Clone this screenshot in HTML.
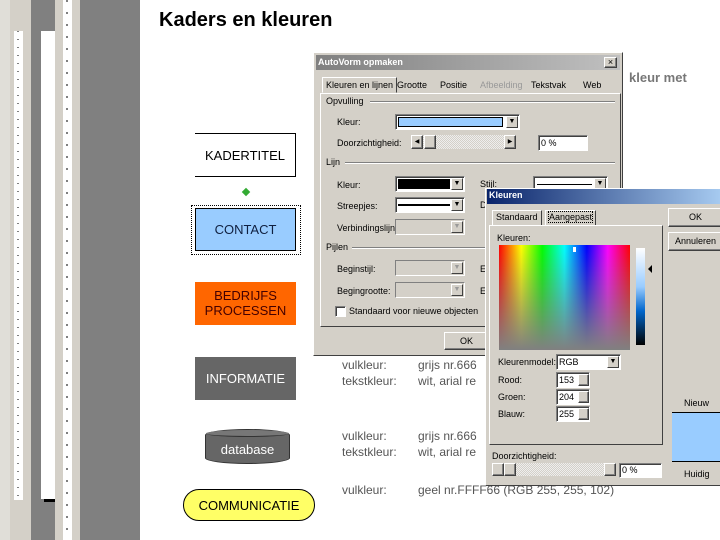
<!DOCTYPE html>
<html><head><meta charset="utf-8"><style>
*{margin:0;padding:0;box-sizing:border-box}
body{width:720px;height:540px;overflow:hidden;position:relative;background:#fff;font-family:"Liberation Sans",sans-serif}
.a{position:absolute}
.t{font-size:9px;color:#000;white-space:nowrap}
.g{font-size:12px;color:#555;white-space:nowrap}
.btn{background:#d4d0c8;border:1px solid;border-color:#fff #404040 #404040 #fff;box-shadow:inset -1px -1px #808080;font-size:9px;text-align:center}
.fld{background:#fff;border:1px solid;border-color:#808080 #fff #fff #808080;box-shadow:inset 1px 1px #404040}
.dis{background:#d4d0c8;border:1px solid;border-color:#808080 #fff #fff #808080}
.dd{position:absolute;right:1px;top:1px;bottom:1px;width:12px;background:#d4d0c8;border:1px solid;border-color:#fff #404040 #404040 #fff;font-size:7px;text-align:center;line-height:10px}
.sep{position:absolute;height:2px;border-top:1px solid #808080;border-bottom:1px solid #fff}
</style></head><body>
<div class="a" style="left:0;top:0;width:140px;height:540px;background:#d4d0c8"></div>
<div class="a" style="left:0;top:0;width:10px;height:540px;background:#e0ded8"></div>
<div class="a" style="left:14px;top:31px;width:9px;height:469px;background:#fff"></div>
<div class="a" style="left:31px;top:0;width:24px;height:540px;background:#808080"></div>
<div class="a" style="left:41px;top:31px;width:14px;height:468px;background:#fff"></div>
<div class="a" style="left:44px;top:499px;width:11px;height:3px;background:#000"></div>
<div class="a" style="left:63px;top:0;width:9px;height:540px;background:#fff"></div>
<div class="a" style="left:80px;top:0;width:60px;height:540px;background:#808080"></div>
<svg class="a" style="left:14px;top:31px" width="9" height="469"><line x1="4" y1="0" x2="4" y2="469" stroke="#000" stroke-dasharray="1 7"/></svg>
<svg class="a" style="left:63px;top:0" width="9" height="540"><line x1="4" y1="0" x2="4" y2="540" stroke="#000" stroke-dasharray="2 10"/></svg>

<div class="a" style="left:159px;top:9px;font-size:20px;font-weight:bold;color:#000">Kaders en kleuren</div>
<div class="a" style="left:629px;top:70px;font-size:13px;font-weight:bold;color:#777">kleur met</div>

<div class="a" style="left:195px;top:133px;width:101px;height:44px;border:1px solid #000;border-left:none;font-size:13px;line-height:44px;text-align:center">KADERTITEL</div>
<div class="a" style="left:243px;top:189px;width:6px;height:6px;background:#3a3;transform:rotate(45deg)"></div>
<div class="a" style="left:191px;top:205px;width:110px;height:50px;border:1px dotted #000"></div>
<div class="a" style="left:195px;top:208px;width:101px;height:43px;background:#99ccff;border:1px solid #000;font-size:13px;line-height:41px;text-align:center;color:#102040">CONTACT</div>
<div class="a" style="left:195px;top:282px;width:101px;height:43px;background:#ff6600;font-size:13px;line-height:15px;padding-top:6px;text-align:center;color:#400">BEDRIJFS<br>PROCESSEN</div>
<div class="a" style="left:195px;top:357px;width:101px;height:43px;background:#666;font-size:13px;line-height:43px;text-align:center;color:#fff">INFORMATIE</div>
<div class="a" style="left:205px;top:429px;width:85px;height:35px;background:#666;border:1px solid #333;border-radius:42px/6px;font-size:13px;line-height:40px;text-align:center;color:#fff">database</div>
<div class="a" style="left:206px;top:430px;width:83px;height:7px;background:#777;border-bottom:1px solid #333;border-radius:50%"></div>
<div class="a" style="left:183px;top:489px;width:132px;height:32px;background:#ffff66;border:1px solid #000;border-radius:16px;font-size:13px;line-height:32px;text-align:center">COMMUNICATIE</div>

<div class="a g" style="left:342px;top:358px">vulkleur:</div>
<div class="a g" style="left:418px;top:358px">grijs nr.666</div>
<div class="a g" style="left:342px;top:374px">tekstkleur:</div>
<div class="a g" style="left:418px;top:374px">wit, arial re</div>
<div class="a g" style="left:342px;top:429px">vulkleur:</div>
<div class="a g" style="left:418px;top:429px">grijs nr.666</div>
<div class="a g" style="left:342px;top:445px">tekstkleur:</div>
<div class="a g" style="left:418px;top:445px">wit, arial re</div>
<div class="a g" style="left:342px;top:483px">vulkleur:</div>
<div class="a g" style="left:418px;top:483px">geel nr.FFFF66 (RGB 255, 255, 102)</div>

<div class="a" style="left:313px;top:52px;width:310px;height:304px;background:#d4d0c8;border:1px solid;border-color:#fff #404040 #404040 #fff"></div>
<div class="a" style="left:316px;top:55px;width:304px;height:15px;background:linear-gradient(90deg,#808080,#c0c0c0)"></div>
<div class="a t" style="left:318px;top:57px;color:#fff;font-weight:bold">AutoVorm opmaken</div>
<div class="a btn" style="left:604px;top:57px;width:13px;height:11px;font-size:9px;line-height:9px">×</div>
<div class="a t" style="left:322px;top:77px;padding:2px 3px;border:1px solid;border-color:#fff #404040 transparent #fff;background:#d4d0c8;height:16px">Kleuren en lijnen</div>
<div class="a t" style="left:397px;top:80px">Grootte</div>
<div class="a t" style="left:440px;top:80px">Positie</div>
<div class="a t" style="left:480px;top:80px;color:#999">Afbeelding</div>
<div class="a t" style="left:531px;top:80px">Tekstvak</div>
<div class="a t" style="left:583px;top:80px">Web</div>
<div class="a" style="left:320px;top:93px;width:301px;height:234px;border:1px solid;border-color:#fff #404040 #404040 #fff"></div>
<div class="a t" style="left:326px;top:96px">Opvulling</div><div class="sep" style="left:370px;top:101px;width:245px"></div>
<div class="a t" style="left:337px;top:117px">Kleur:</div>
<div class="a fld" style="left:395px;top:114px;width:125px;height:16px"><div class="a" style="left:2px;top:2px;width:105px;height:10px;background:#99ccff;border:1px solid #000"></div><div class="dd">▼</div></div>
<div class="a t" style="left:337px;top:138px">Doorzichtigheid:</div>
<div class="a" style="left:411px;top:135px;width:105px;height:14px;background:repeating-conic-gradient(#eee 0 25%,#d4d0c8 0 50%) 0 0/2px 2px"></div>
<div class="a btn" style="left:411px;top:135px;width:12px;height:14px;font-size:6px;line-height:12px">◀</div>
<div class="a btn" style="left:424px;top:135px;width:12px;height:14px"></div>
<div class="a btn" style="left:504px;top:135px;width:12px;height:14px;font-size:6px;line-height:12px">▶</div>
<div class="a fld t" style="left:538px;top:135px;width:50px;height:16px;padding:2px">0 %</div>
<div class="a t" style="left:326px;top:157px">Lijn</div><div class="sep" style="left:345px;top:162px;width:270px"></div>
<div class="a t" style="left:337px;top:180px">Kleur:</div>
<div class="a fld" style="left:395px;top:176px;width:70px;height:16px"><div class="a" style="left:2px;top:2px;width:52px;height:10px;background:#000"></div><div class="dd">▼</div></div>
<div class="a t" style="left:480px;top:179px">Stijl:</div>
<div class="a fld" style="left:533px;top:176px;width:75px;height:16px"><div class="a" style="left:3px;top:7px;width:55px;height:1px;background:#000"></div><div class="dd">▼</div></div>
<div class="a t" style="left:337px;top:201px">Streepjes:</div>
<div class="a fld" style="left:395px;top:197px;width:70px;height:16px"><div class="a" style="left:2px;top:6px;width:52px;height:2px;background:#000"></div><div class="dd">▼</div></div>
<div class="a t" style="left:480px;top:200px">D</div>
<div class="a t" style="left:337px;top:223px">Verbindingslijn:</div>
<div class="a dis" style="left:395px;top:219px;width:70px;height:16px"><div class="dd" style="color:#999">▼</div></div>
<div class="a t" style="left:326px;top:242px">Pijlen</div><div class="sep" style="left:352px;top:247px;width:140px"></div>
<div class="a t" style="left:337px;top:264px">Beginstijl:</div>
<div class="a dis" style="left:395px;top:260px;width:70px;height:16px"><div class="dd" style="color:#999">▼</div></div>
<div class="a t" style="left:480px;top:264px">E</div>
<div class="a t" style="left:337px;top:286px">Begingrootte:</div>
<div class="a dis" style="left:395px;top:282px;width:70px;height:16px"><div class="dd" style="color:#999">▼</div></div>
<div class="a t" style="left:480px;top:286px">E</div>
<div class="a fld" style="left:335px;top:306px;width:11px;height:11px"></div>
<div class="a t" style="left:349px;top:306px">Standaard voor nieuwe objecten</div>
<div class="a btn" style="left:444px;top:332px;width:45px;height:18px;line-height:16px">OK</div>

<div class="a" style="left:485px;top:188px;width:240px;height:298px;background:#d4d0c8;border:1px solid;border-color:#fff #404040 #404040 #fff"></div>
<div class="a" style="left:487px;top:189px;width:233px;height:15px;background:linear-gradient(90deg,#0a246a,#a6caf0)"></div>
<div class="a t" style="left:489px;top:190px;color:#fff;font-weight:bold">Kleuren</div>
<div class="a t" style="left:492px;top:210px;padding:1px 3px;border:1px solid;border-color:#fff #404040 transparent #fff;height:16px">Standaard</div>
<div class="a t" style="left:545px;top:210px;padding:1px 3px;border:1px solid;border-color:#fff #404040 transparent #fff;height:16px"><span style="outline:1px dotted #000">Aangepast</span></div>
<div class="a" style="left:489px;top:225px;width:174px;height:220px;border:1px solid;border-color:#fff #404040 #404040 #fff"></div>
<div class="a t" style="left:497px;top:233px">Kleuren:</div>
<div class="a" style="left:499px;top:245px;width:131px;height:105px;background:linear-gradient(90deg,#f00,#ff0 17%,#0f0 33%,#0ff 50%,#00f 67%,#f0f 83%,#f00)"></div>
<div class="a" style="left:499px;top:245px;width:131px;height:105px;background:linear-gradient(rgba(128,128,128,0),#808080)"></div>
<div class="a" style="left:573px;top:247px;width:3px;height:5px;background:#fff"></div>
<div class="a" style="left:636px;top:248px;width:9px;height:97px;background:linear-gradient(#fff,#99ccff 40%,#0066cc 65%,#000)"></div>
<div class="a" style="left:648px;top:265px;width:0;height:0;border:4px solid transparent;border-right-color:#000;border-left:none"></div>
<div class="a t" style="left:498px;top:357px">Kleurenmodel:</div>
<div class="a fld t" style="left:556px;top:354px;width:65px;height:16px;padding:2px">RGB<div class="dd">▼</div></div>
<div class="a t" style="left:498px;top:375px">Rood:</div>
<div class="a fld t" style="left:556px;top:372px;width:34px;height:16px;padding:2px">153</div>
<div class="a t" style="left:498px;top:392px">Groen:</div>
<div class="a fld t" style="left:556px;top:389px;width:34px;height:16px;padding:2px">204</div>
<div class="a t" style="left:498px;top:409px">Blauw:</div>
<div class="a fld t" style="left:556px;top:406px;width:34px;height:16px;padding:2px">255</div>
<div class="a btn" style="left:578px;top:374px;width:11px;height:12px"></div>
<div class="a btn" style="left:578px;top:391px;width:11px;height:12px"></div>
<div class="a btn" style="left:578px;top:408px;width:11px;height:12px"></div>
<div class="a t" style="left:492px;top:451px">Doorzichtigheid:</div>
<div class="a" style="left:492px;top:463px;width:123px;height:13px;background:repeating-conic-gradient(#eee 0 25%,#d4d0c8 0 50%) 0 0/2px 2px"></div>
<div class="a btn" style="left:492px;top:463px;width:12px;height:13px"></div>
<div class="a btn" style="left:504px;top:463px;width:12px;height:13px"></div>
<div class="a btn" style="left:604px;top:463px;width:12px;height:13px"></div>
<div class="a fld t" style="left:619px;top:463px;width:43px;height:15px;padding:1px 2px">0 %</div>
<div class="a btn" style="left:668px;top:208px;width:55px;height:19px;line-height:17px">OK</div>
<div class="a btn" style="left:668px;top:232px;width:55px;height:19px;line-height:17px">Annuleren</div>
<div class="a t" style="left:684px;top:398px">Nieuw</div>
<div class="a" style="left:672px;top:412px;width:50px;height:50px;background:#99ccff;border-top:1px solid #000;border-bottom:1px solid #000"></div>
<div class="a t" style="left:684px;top:469px">Huidig</div>
</body></html>
